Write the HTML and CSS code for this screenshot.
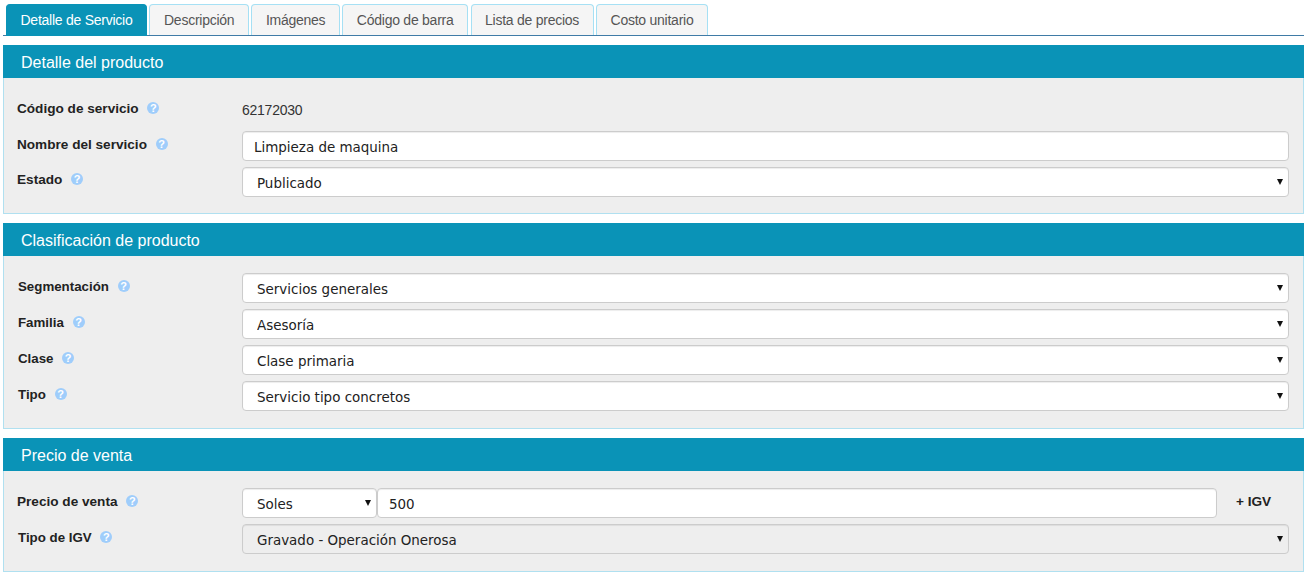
FILE: index.html
```html
<!DOCTYPE html>
<html lang="es">
<head>
<meta charset="utf-8">
<title>Detalle de Servicio</title>
<link rel="stylesheet" href="styles.css">
</head>
<body>
<nav class="tabs">
  <a class="tab tab-active">Detalle de Servicio</a>
  <a class="tab">Descripción</a>
  <a class="tab">Imágenes</a>
  <a class="tab">Código de barra</a>
  <a class="tab">Lista de precios</a>
  <a class="tab">Costo unitario</a>
</nav>

<section class="panel panel-first">
  <h2 class="panel-title">Detalle del producto</h2>
  <div class="panel-body panel-body-tight">
    <div class="row">
      <label class="label">Código de servicio <span class="help">?</span></label>
      <div class="static">62172030</div>
    </div>
    <div class="row">
      <label class="label">Nombre del servicio <span class="help">?</span></label>
      <input class="control" type="text" value="Limpieza de maquina">
    </div>
    <div class="row">
      <label class="label label-raised">Estado <span class="help">?</span></label>
      <div class="select-wrap"><select class="control select"><option>Publicado</option></select></div>
    </div>
  </div>
</section>

<section class="panel">
  <h2 class="panel-title">Clasificación de producto</h2>
  <div class="panel-body">
    <div class="row">
      <label class="label label-indent">Segmentación <span class="help">?</span></label>
      <div class="select-wrap"><select class="control select"><option>Servicios generales</option></select></div>
    </div>
    <div class="row">
      <label class="label label-indent">Familia <span class="help">?</span></label>
      <div class="select-wrap"><select class="control select"><option>Asesoría</option></select></div>
    </div>
    <div class="row">
      <label class="label label-indent">Clase <span class="help">?</span></label>
      <div class="select-wrap"><select class="control select"><option>Clase primaria</option></select></div>
    </div>
    <div class="row">
      <label class="label label-indent">Tipo <span class="help">?</span></label>
      <div class="select-wrap"><select class="control select"><option>Servicio tipo concretos</option></select></div>
    </div>
  </div>
</section>

<section class="panel">
  <h2 class="panel-title">Precio de venta</h2>
  <div class="panel-body">
    <div class="row">
      <label class="label">Precio de venta <span class="help">?</span></label>
      <div class="price">
        <div class="select-wrap currency"><select class="control select"><option>Soles</option></select></div>
        <input class="control amount" type="text" value="500">
        <span class="igv">+ IGV</span>
      </div>
    </div>
    <div class="row">
      <label class="label label-indent">Tipo de IGV <span class="help">?</span></label>
      <div class="select-wrap"><select class="control select" disabled><option>Gravado - Operación Onerosa</option></select></div>
    </div>
  </div>
</section>
</body>
</html>
```
FILE: styles.css
```css
* { box-sizing: border-box; }

html, body { margin: 0; padding: 0; background: #fff; }

body {
  padding: 4px 6px 0 3px;
  font-family: "Liberation Sans", Arial, sans-serif;
  font-size: 14px;
  color: #333;
}

.tabs {
  display: flex;
  gap: 2.5px;
  height: 32px;
  padding-left: 3px;
  border-bottom: 1px solid #3f7ba6;
}

.tab {
  height: 32px;
  padding: 7px 13.5px 0;
  font-size: 14px;
  line-height: 16px;
  letter-spacing: -0.25px;
  color: #555;
  background: #f5f5f5;
  border: 1px solid #a6e0f4;
  border-bottom: 0;
  border-radius: 4px 4px 0 0;
}

.tab:not(.tab-active) { height: 31px; }

.tab-active {
  color: #fff;
  background: #0a93b7;
  border-color: #0a93b7;
}

.panel {
  margin-top: 9px;
  background: #eee;
  border: 1px solid #b0e0f0;
  border-top: 0;
}

.panel-title {
  margin: 0 -1px;
  height: 33px;
  padding: 1px 0 0 18px;
  font-size: 16px;
  font-weight: 400;
  line-height: 33px;
  color: #fff;
  background: #0a93b7;
}

.panel-body {
  display: flex;
  flex-direction: column;
  gap: 6px;
  padding: 17px 14px 17px 13px;
}

.panel-body-tight { padding-bottom: 16px; }

.row {
  display: grid;
  grid-template-columns: 225px 1fr;
  height: 30px;
}

.label {
  padding-top: 6px;
  font-size: 13.6px;
  font-weight: 700;
  line-height: 16px;
  color: #222;
}

.label-raised { padding-top: 5px; }

.label-indent {
  padding-left: 1px;
  font-size: 13.3px;
}

.help {
  display: inline-block;
  width: 12px;
  height: 12px;
  margin-left: 5px;
  border-radius: 50%;
  font-size: 11px;
  font-weight: 700;
  line-height: 12px;
  text-align: center;
  color: #fff;
  background: #9fcdfb;
  vertical-align: 1px;
}

.static {
  line-height: 30px;
  font-size: 14px;
  letter-spacing: -0.25px;
}

.control {
  display: block;
  width: 100%;
  height: 30px;
  padding: 3px 11px 0;
  font-family: "DejaVu Sans", Verdana, sans-serif;
  font-size: 13.45px;
  color: #222;
  background: #fff;
  border: 1px solid #ccc;
  border-radius: 4px;
  box-shadow: inset 0 1px 1px rgba(0, 0, 0, .075);
  outline: 0;
}

.select {
  padding-left: 14px;
  appearance: none;
  -webkit-appearance: none;
}

.select:disabled {
  background: #eee;
  color: #222;
  opacity: 1;
}

.select-wrap { position: relative; }

.select-wrap::after {
  content: "";
  position: absolute;
  top: 12px;
  right: 6px;
  border-style: solid;
  border-width: 6px 3px 0;
  border-color: #111 transparent transparent;
  pointer-events: none;
}

.price { display: flex; }

.currency { flex: 0 0 135px; }

.amount { flex: 1 1 auto; width: auto; }

.igv {
  flex: 0 0 72px;
  padding: 6px 0 0 19px;
  font-size: 13.6px;
  font-weight: 700;
  line-height: 16px;
  color: #222;
}
```
